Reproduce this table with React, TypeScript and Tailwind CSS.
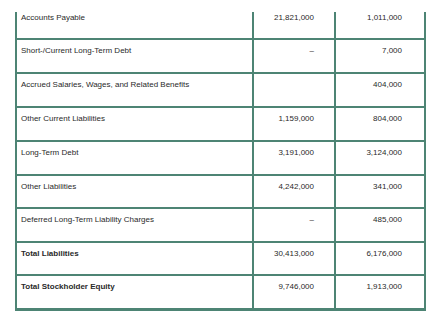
import React from "react";

type Row = { label: string; a: string; b: string; bold?: boolean; h: string; first?: boolean };

const rows: Row[] = [
  { label: "Accounts Payable", a: "21,821,000", b: "1,011,000", h: "h-[28px]", first: true },
  { label: "Short-/Current Long-Term Debt", a: "–", b: "7,000", h: "h-[34px]" },
  { label: "Accrued Salaries, Wages, and Related Benefits", a: "", b: "404,000", h: "h-[34px]" },
  { label: "Other Current Liabilities", a: "1,159,000", b: "804,000", h: "h-[34px]" },
  { label: "Long-Term Debt", a: "3,191,000", b: "3,124,000", h: "h-[34px]" },
  { label: "Other Liabilities", a: "4,242,000", b: "341,000", h: "h-[33px]" },
  { label: "Deferred Long-Term Liability Charges", a: "–", b: "485,000", h: "h-[34px]" },
  { label: "Total Liabilities", a: "30,413,000", b: "6,176,000", bold: true, h: "h-[33px]" },
  { label: "Total Stockholder Equity", a: "9,746,000", b: "1,913,000", bold: true, h: "h-[35px]" },
];

export default function App() {
  return (
    <div
      className="w-[434px] h-[315px] bg-white pt-[12px] pl-[15px] overflow-hidden text-[8px] leading-[10px] text-[#2a2a2a]"
      style={{ fontFamily: '"Liberation Sans", Arial, sans-serif' }}
    >
      <div className="w-[411px] flex flex-col">
        {rows.map((r, i) => {
          const last = i === rows.length - 1;
          const pt = r.first ? "pt-[1px]" : "pt-[6px]";
          return (
            <div
              key={r.label}
              className={`grid grid-cols-[237px_82px_92px] ${r.h} ${
                last ? "border-b-[3px]" : "border-b-2"
              } border-[#4d8474]`}
            >
              <div className={`border-l-2 border-[#4d8474] pl-[4px] ${pt} ${r.bold ? "font-bold" : ""}`}>
                {r.label}
              </div>
              <div className={`border-l-2 border-[#4d8474] pr-[20px] text-right ${pt}`}>{r.a}</div>
              <div className={`border-l-2 border-r-2 border-[#4d8474] pr-[22px] text-right ${pt}`}>{r.b}</div>
            </div>
          );
        })}
      </div>
    </div>
  );
}
